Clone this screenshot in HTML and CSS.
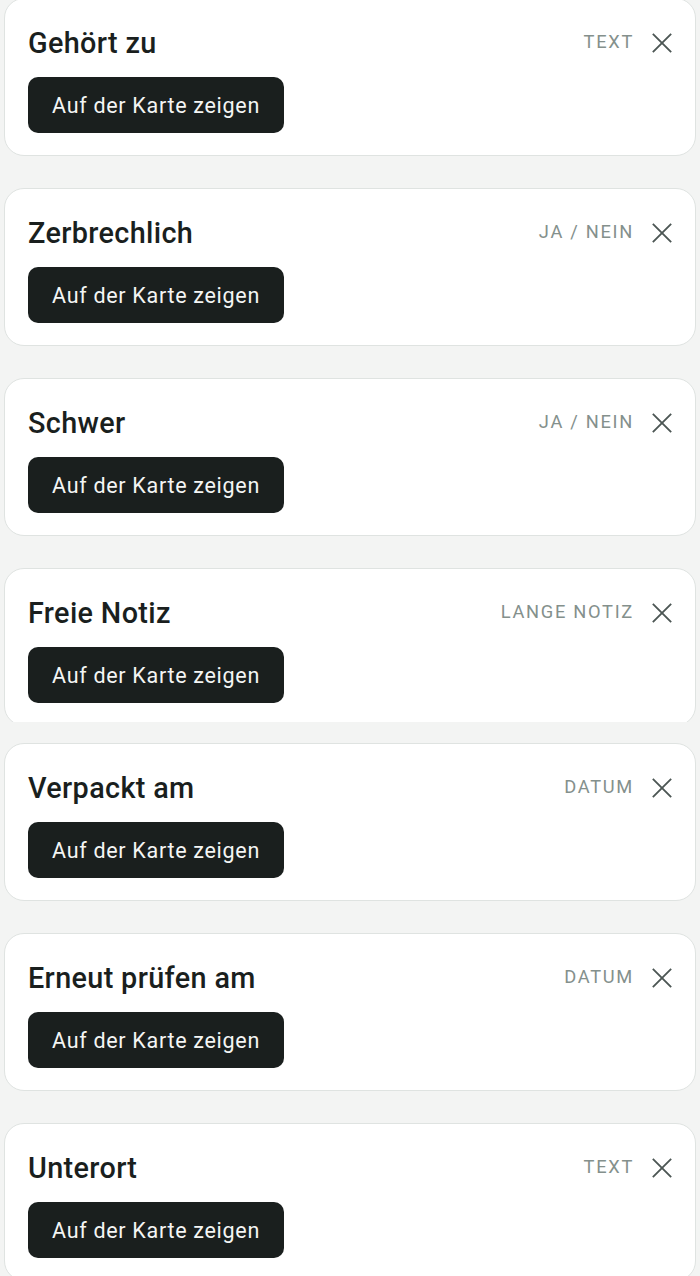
FILE: index.html
```html
<!DOCTYPE html>
<html lang="de">
<head>
<meta charset="utf-8">
<link rel="stylesheet" href="styles.css">
</head>
<body>
<div class="section section-top">
  <div class="list list-top">
    <div class="card">
      <div class="head"><span class="title">Gehört zu</span><span class="type">TEXT</span><span class="close"><svg viewBox="0 0 24 24" width="24" height="24"><path d="M2 2L22 22M22 2L2 22"/></svg></span></div>
      <button class="btn">Auf der Karte zeigen</button>
    </div>
    <div class="card">
      <div class="head"><span class="title">Zerbrechlich</span><span class="type">JA / NEIN</span><span class="close"><svg viewBox="0 0 24 24" width="24" height="24"><path d="M2 2L22 22M22 2L2 22"/></svg></span></div>
      <button class="btn">Auf der Karte zeigen</button>
    </div>
    <div class="card">
      <div class="head"><span class="title">Schwer</span><span class="type">JA / NEIN</span><span class="close"><svg viewBox="0 0 24 24" width="24" height="24"><path d="M2 2L22 22M22 2L2 22"/></svg></span></div>
      <button class="btn">Auf der Karte zeigen</button>
    </div>
    <div class="card">
      <div class="head"><span class="title">Freie Notiz</span><span class="type">LANGE NOTIZ</span><span class="close"><svg viewBox="0 0 24 24" width="24" height="24"><path d="M2 2L22 22M22 2L2 22"/></svg></span></div>
      <button class="btn">Auf der Karte zeigen</button>
    </div>
  </div>
</div>
<div class="section section-bottom">
  <div class="list">
    <div class="card">
      <div class="head"><span class="title">Verpackt am</span><span class="type">DATUM</span><span class="close"><svg viewBox="0 0 24 24" width="24" height="24"><path d="M2 2L22 22M22 2L2 22"/></svg></span></div>
      <button class="btn">Auf der Karte zeigen</button>
    </div>
    <div class="card">
      <div class="head"><span class="title">Erneut prüfen am</span><span class="type">DATUM</span><span class="close"><svg viewBox="0 0 24 24" width="24" height="24"><path d="M2 2L22 22M22 2L2 22"/></svg></span></div>
      <button class="btn">Auf der Karte zeigen</button>
    </div>
    <div class="card">
      <div class="head"><span class="title">Unterort</span><span class="type">TEXT</span><span class="close"><svg viewBox="0 0 24 24" width="24" height="24"><path d="M2 2L22 22M22 2L2 22"/></svg></span></div>
      <button class="btn">Auf der Karte zeigen</button>
    </div>
  </div>
</div>
</body>
</html>
```
FILE: styles.css
```css
html, body {
  margin: 0;
  padding: 0;
  background: #f3f4f3;
  font-family: Roboto, "Noto Sans", sans-serif;
  color: #1a1f1e;
}
body {
  height: 1276px;
  overflow: hidden;
}
.section-top {
  height: 722px;
  overflow: hidden;
}
.list {
  display: flex;
  flex-direction: column;
  gap: 32px;
  padding: 0 4px;
}
.list-top {
  margin-top: -2px;
}
.section-bottom {
  padding-top: 21px;
}
.card {
  box-sizing: border-box;
  height: 158px;
  background: #ffffff;
  border: 1.5px solid #dfe3e1;
  border-radius: 20px;
  padding: 24px 23px 22px 23px;
  display: flex;
  flex-direction: column;
  align-items: flex-start;
}
.head {
  align-self: stretch;
  display: flex;
  align-items: center;
  height: 40px;
}
.title {
  flex: 1;
  font-size: 28.8px;
  font-weight: 500;
  line-height: 40px;
  color: #1a1f1e;
  letter-spacing: 0.35px;
  margin-top: -1px;
}
.type {
  font-size: 18.3px;
  letter-spacing: 1.7px;
  color: #84908c;
  margin-right: 17px;
  margin-top: -4px;
}
.close {
  width: 22px;
  height: 22px;
  display: flex;
  margin-right: -1px;
  margin-top: 0px;
}
.close svg {
  width: 22px;
  height: 22px;
  stroke: #4c5654;
  stroke-width: 2;
  fill: none;
}
.btn {
  margin-top: 14px;
  height: 56px;
  width: 256px;
  border: none;
  border-radius: 10px;
  background: #1a1f1e;
  color: #f4f5f4;
  font-family: Roboto, "Noto Sans", sans-serif;
  font-size: 21.5px;
  letter-spacing: 0.7px;
  padding: 0;
  text-align: center;
}
```
